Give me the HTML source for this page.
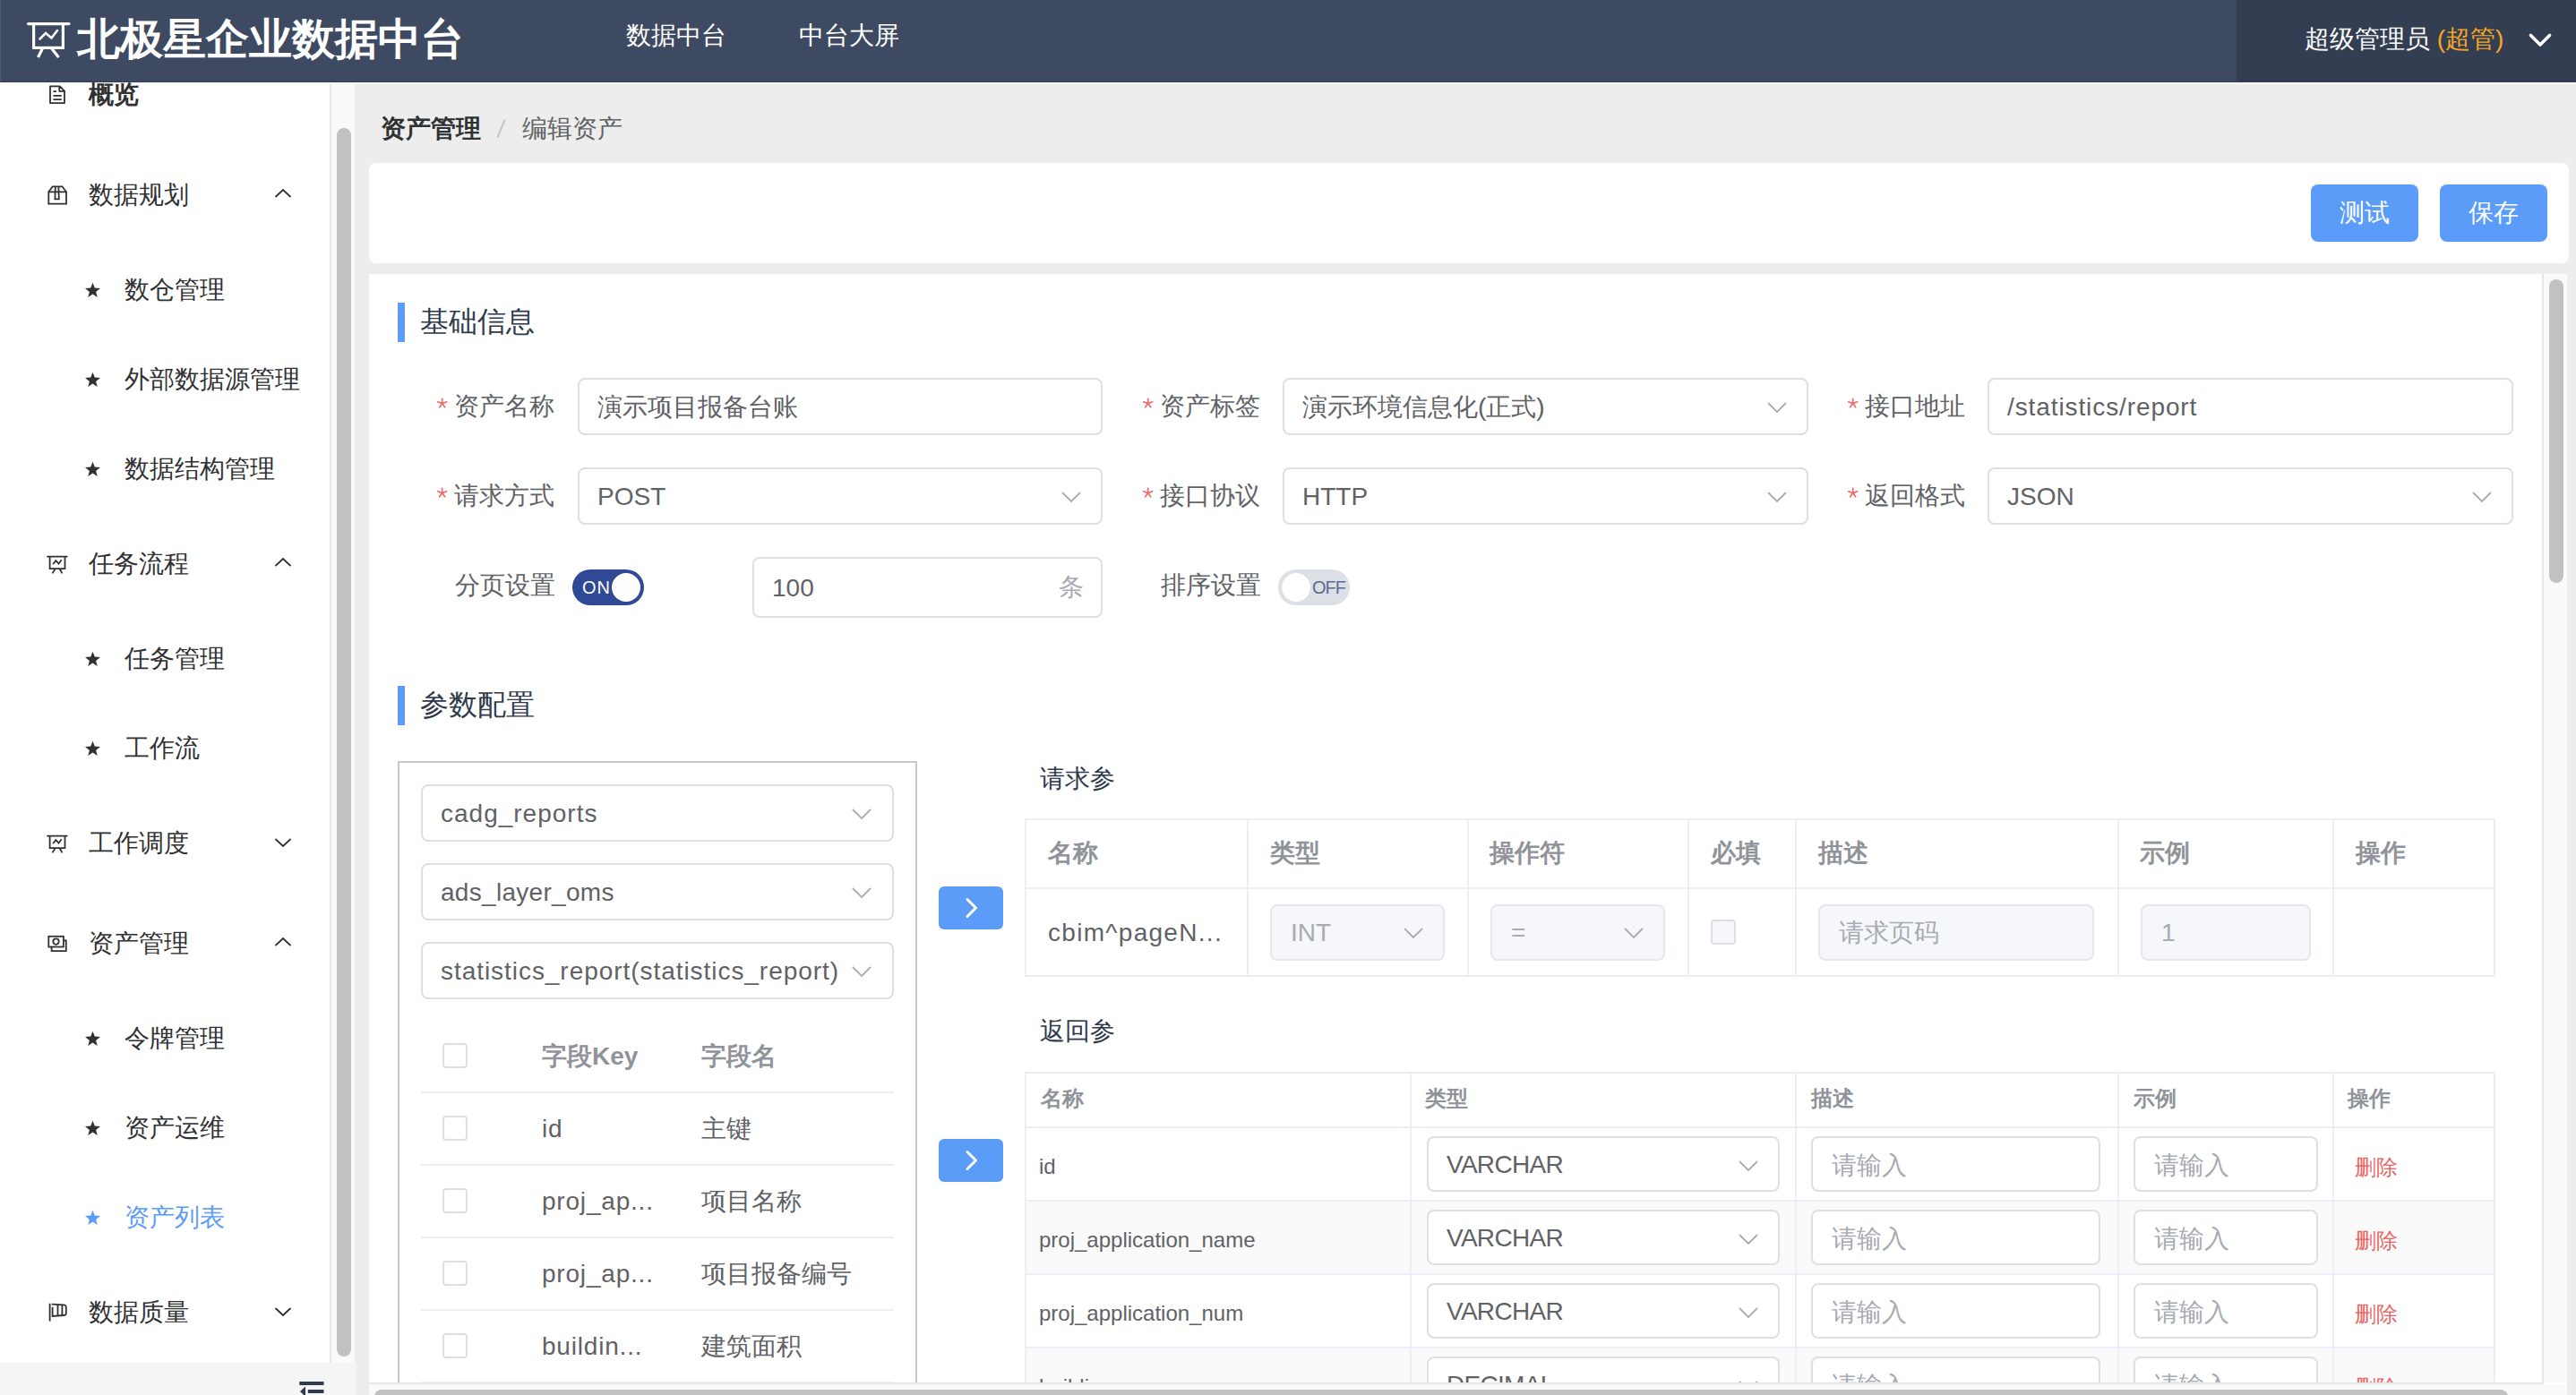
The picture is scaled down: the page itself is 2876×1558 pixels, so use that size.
<!DOCTYPE html>
<html><head><meta charset="utf-8">
<style>
*{box-sizing:border-box;margin:0;padding:0}
html,body{width:2876px;height:1558px;overflow:hidden}
body{position:relative;background:#ededed;font-family:"Liberation Sans",sans-serif;color:#303133}
.a{position:absolute}
.t{position:absolute;white-space:nowrap;line-height:40px}
/* header */
#hdr{left:0;top:0;width:2876px;height:92px;background:#3e4a62;border-bottom:1px solid #333e55}
#hdr2{left:2497px;top:0;width:379px;height:91px;background:#343e52}
#wl{left:0;top:92px;width:2876px;height:2px;background:linear-gradient(#fff 50%,#f4f4f4 50%)}
/* sidebar */
#side{left:0;top:94px;width:368px;height:1464px;background:#fff;overflow:hidden}
#sbord{left:368px;top:94px;width:2px;height:1428px;background:#e8e8e8}
#strack{left:370px;top:94px;width:26px;height:1428px;background:#fafafa}
#sthumb{left:376px;top:143px;width:16px;height:1372px;background:#c1c1c1;border-radius:8px}
#sbot{left:0;top:1522px;width:398px;height:36px;background:#f5f5f5}
.mi{font-size:28px;color:#303133}
.ic{position:absolute}
/* content */
.card{background:#fff}
.btn{position:absolute;background:#5a9cf8;border-radius:8px;color:#fff;font-size:28px;text-align:center;line-height:64px;height:64px;width:120px;top:206px}
.inp{position:absolute;border:2px solid #dcdfe6;border-radius:8px;background:#fff;height:64px}
.inp .v{position:absolute;left:20px;top:0;line-height:60px;font-size:28px;color:#606266;white-space:nowrap}
.chev{position:absolute;width:20px;height:12px}
.lbl{font-size:28px;color:#606266}
.req{font-size:28px;color:#f56c6c}
.sec{position:absolute;width:8px;height:44px;background:#5a9cf8}
.sect{font-size:32px;color:#2f3a4c}
</style></head><body>
<!-- HEADER -->
<div id="hdr" class="a"></div>
<div id="hdr2" class="a"></div>
<div class="a" style="left:0;top:0;width:1px;height:91px;background:#525d73"></div>
<div id="wl" class="a"></div>
<svg class="a" style="left:0;top:0" width="100" height="92" viewBox="0 0 100 92">
 <g fill="none" stroke="#fff" stroke-width="3.2" stroke-linecap="butt">
  <line x1="31.5" y1="26.6" x2="77" y2="26.6" stroke-linecap="round"/>
  <polyline points="37.6,27 37.6,53.3 70.4,53.3 70.4,27"/>
  <line x1="47.5" y1="54" x2="42.5" y2="64"/>
  <line x1="57.5" y1="54" x2="65.5" y2="64"/>
  <polyline points="44.5,43.5 51,37 57.5,42.5 64,34" stroke-width="2.6" stroke-linecap="round"/>
 </g>
</svg>
<div class="t" style="left:86px;top:14px;font-size:48px;font-weight:bold;color:#fff;line-height:60px">北极星企业数据中台</div>
<div class="t" style="left:699px;top:20px;font-size:28px;color:#fff">数据中台</div>
<div class="t" style="left:892px;top:20px;font-size:28px;color:#fff">中台大屏</div>
<div class="t" style="left:2573px;top:24px;font-size:28px;color:#fff">超级管理员 <span style="color:#f5a623">(超管)</span></div>
<svg class="a" style="left:2820px;top:34px" width="32" height="22" viewBox="0 0 32 22">
 <polyline points="5.5,5.5 16,16 26.5,5.5" fill="none" stroke="#fff" stroke-width="3.6" stroke-linecap="round" stroke-linejoin="round"/>
</svg>

<!-- SIDEBAR -->
<div id="side" class="a"></div>
<div class="t mi" style="left:99px;top:86px;font-weight:bold;">概览</div>
<svg class="a" style="left:50px;top:90px" width="30" height="30" viewBox="50 90 30 30"><path d="M56,96.3 H66.8 L72,101.6 V115.1 H56 Z M66.3,96.3 V101.9 H72" fill="none" stroke="#303133" stroke-width="1.8" stroke-linejoin="round"/><path d="M59.4,102.1 H63 M59.4,106.9 H68.7 M59.4,111.2 H68.7" fill="none" stroke="#303133" stroke-width="1.8"/></svg>
<div class="t mi" style="left:99px;top:198px;">数据规划</div>
<svg class="a" style="left:50px;top:200px" width="30" height="32" viewBox="50 200 30 32"><path d="M54.3,214.3 H74 V227.6 H54.3 Z" fill="none" stroke="#303133" stroke-width="1.8"/><path d="M54.3,214.3 L58.8,208.3 H69.4 L74,214.3" fill="none" stroke="#303133" stroke-width="1.8"/><path d="M61.8,208.3 L61.4,222.4 H65.8 L65.4,208.3" fill="none" stroke="#303133" stroke-width="1.8"/></svg>
<svg class="a" style="left:300px;top:202px" width="32" height="30" viewBox="300 202 32 30"><polyline points="307.5,220 316,212 324.5,220" fill="none" stroke="#303133" stroke-width="1.8"/></svg>
<div class="t mi" style="left:139px;top:304px;color:#303133">数仓管理</div>
<svg class="a" style="left:90px;top:308px" width="28" height="30" viewBox="90 308 28 30"><polygon points="103.50,315.80 105.75,321.60 111.96,321.95 107.14,325.88 108.73,331.90 103.50,328.53 98.27,331.90 99.86,325.88 95.04,321.95 101.25,321.60" fill="#303133"/></svg>
<div class="t mi" style="left:139px;top:404px;color:#303133">外部数据源管理</div>
<svg class="a" style="left:90px;top:408px" width="28" height="30" viewBox="90 408 28 30"><polygon points="103.50,415.80 105.75,421.60 111.96,421.95 107.14,425.88 108.73,431.90 103.50,428.53 98.27,431.90 99.86,425.88 95.04,421.95 101.25,421.60" fill="#303133"/></svg>
<div class="t mi" style="left:139px;top:504px;color:#303133">数据结构管理</div>
<svg class="a" style="left:90px;top:508px" width="28" height="30" viewBox="90 508 28 30"><polygon points="103.50,515.80 105.75,521.60 111.96,521.95 107.14,525.88 108.73,531.90 103.50,528.53 98.27,531.90 99.86,525.88 95.04,521.95 101.25,521.60" fill="#303133"/></svg>
<div class="t mi" style="left:99px;top:610px;">任务流程</div>
<svg class="a" style="left:50px;top:615px" width="30" height="30" viewBox="50 615 30 30"><path d="M53,621.6 H74.8" fill="none" stroke="#303133" stroke-width="1.8" stroke-linecap="round"/><path d="M55.6,621.6 V635.2 H72.5 V621.6" fill="none" stroke="#303133" stroke-width="1.8"/><path d="M61.5,635.5 L58.5,640.4 M66.8,635.5 L69.4,640.4" fill="none" stroke="#303133" stroke-width="1.8"/><path d="M59.2,630.2 L62.3,626.2 L65.5,629.5 L68.7,625.2" fill="none" stroke="#303133" stroke-width="1.8"/></svg>
<svg class="a" style="left:300px;top:614px" width="32" height="30" viewBox="300 614 32 30"><polyline points="307.5,632 316,624 324.5,632" fill="none" stroke="#303133" stroke-width="1.8"/></svg>
<div class="t mi" style="left:139px;top:716px;color:#303133">任务管理</div>
<svg class="a" style="left:90px;top:720px" width="28" height="30" viewBox="90 720 28 30"><polygon points="103.50,727.80 105.75,733.60 111.96,733.95 107.14,737.88 108.73,743.90 103.50,740.53 98.27,743.90 99.86,737.88 95.04,733.95 101.25,733.60" fill="#303133"/></svg>
<div class="t mi" style="left:139px;top:816px;color:#303133">工作流</div>
<svg class="a" style="left:90px;top:820px" width="28" height="30" viewBox="90 820 28 30"><polygon points="103.50,827.80 105.75,833.60 111.96,833.95 107.14,837.88 108.73,843.90 103.50,840.53 98.27,843.90 99.86,837.88 95.04,833.95 101.25,833.60" fill="#303133"/></svg>
<div class="t mi" style="left:99px;top:922px;">工作调度</div>
<svg class="a" style="left:50px;top:927px" width="30" height="30" viewBox="50 615 30 30"><path d="M53,621.6 H74.8" fill="none" stroke="#303133" stroke-width="1.8" stroke-linecap="round"/><path d="M55.6,621.6 V635.2 H72.5 V621.6" fill="none" stroke="#303133" stroke-width="1.8"/><path d="M61.5,635.5 L58.5,640.4 M66.8,635.5 L69.4,640.4" fill="none" stroke="#303133" stroke-width="1.8"/><path d="M59.2,630.2 L62.3,626.2 L65.5,629.5 L68.7,625.2" fill="none" stroke="#303133" stroke-width="1.8"/></svg>
<svg class="a" style="left:300px;top:926px" width="32" height="30" viewBox="300 926 32 30"><polyline points="307.5,937 316,945 324.5,937" fill="none" stroke="#303133" stroke-width="1.8"/></svg>
<div class="t mi" style="left:99px;top:1034px;">资产管理</div>
<svg class="a" style="left:50px;top:1040px" width="30" height="26" viewBox="50 1040 30 26"><rect x="54.3" y="1045.8" width="16.6" height="11.7" fill="none" stroke="#303133" stroke-width="1.8"/><path d="M70.9,1050.4 H73.8 V1062.2 H57.6 V1057.5" fill="none" stroke="#303133" stroke-width="1.8"/><circle cx="62.5" cy="1051.6" r="3.2" fill="none" stroke="#303133" stroke-width="1.8"/></svg>
<svg class="a" style="left:300px;top:1038px" width="32" height="30" viewBox="300 1038 32 30"><polyline points="307.5,1056 316,1048 324.5,1056" fill="none" stroke="#303133" stroke-width="1.8"/></svg>
<div class="t mi" style="left:139px;top:1140px;color:#303133">令牌管理</div>
<svg class="a" style="left:90px;top:1144px" width="28" height="30" viewBox="90 1144 28 30"><polygon points="103.50,1151.80 105.75,1157.60 111.96,1157.95 107.14,1161.88 108.73,1167.90 103.50,1164.53 98.27,1167.90 99.86,1161.88 95.04,1157.95 101.25,1157.60" fill="#303133"/></svg>
<div class="t mi" style="left:139px;top:1240px;color:#303133">资产运维</div>
<svg class="a" style="left:90px;top:1244px" width="28" height="30" viewBox="90 1244 28 30"><polygon points="103.50,1251.80 105.75,1257.60 111.96,1257.95 107.14,1261.88 108.73,1267.90 103.50,1264.53 98.27,1267.90 99.86,1261.88 95.04,1257.95 101.25,1257.60" fill="#303133"/></svg>
<div class="t mi" style="left:139px;top:1340px;color:#5b9cf7">资产列表</div>
<svg class="a" style="left:90px;top:1344px" width="28" height="30" viewBox="90 1344 28 30"><polygon points="103.50,1351.80 105.75,1357.60 111.96,1357.95 107.14,1361.88 108.73,1367.90 103.50,1364.53 98.27,1367.90 99.86,1361.88 95.04,1357.95 101.25,1357.60" fill="#5b9cf7"/></svg>
<div class="t mi" style="left:99px;top:1446px;">数据质量</div>
<svg class="a" style="left:50px;top:1450px" width="30" height="30" viewBox="50 1450 30 30"><path d="M55.6,1455.8 V1475.6" fill="none" stroke="#303133" stroke-width="1.8"/><path d="M58.6,1457.6 V1456.6 L71.5,1457.4 Q73.8,1457.7 73.8,1460.2 V1466.8 Q73.8,1468.8 71.5,1469 L58.6,1470 V1459.8" fill="none" stroke="#303133" stroke-width="1.8"/><path d="M64.5,1457 V1469.4 M69.4,1457.2 V1469.1" fill="none" stroke="#303133" stroke-width="1.8"/></svg>
<svg class="a" style="left:300px;top:1450px" width="32" height="30" viewBox="300 1450 32 30"><polyline points="307.5,1461 316,1469 324.5,1461" fill="none" stroke="#303133" stroke-width="1.8"/></svg>
<div id="sbord" class="a"></div>
<div id="strack" class="a"></div>
<div id="sthumb" class="a"></div>
<div id="sbot" class="a"></div>
<svg class="a" style="left:330px;top:1538px" width="40" height="20" viewBox="330 1538 40 20"><rect x="334.3" y="1543" width="27.2" height="4" fill="#2d3a4f"/><rect x="343.8" y="1552" width="17.7" height="4" fill="#2d3a4f"/><polygon points="341,1548.5 341,1560 335,1554" fill="#2d3a4f"/></svg>


<!-- BREADCRUMB -->
<div class="t" style="left:425px;top:124px;font-size:28px;font-weight:bold;color:#303133">资产管理</div>
<svg class="a" style="left:548px;top:128px" width="22" height="32" viewBox="548 128 22 32"><line x1="555.3" y1="153.6" x2="563.9" y2="133.4" stroke="#c0c4cc" stroke-width="2"/></svg>
<div class="t" style="left:583px;top:124px;font-size:28px;color:#606266">编辑资产</div>

<!-- TOP CARD -->
<div class="a card" style="left:412px;top:182px;width:2456px;height:112px;border-radius:8px"></div>
<div class="btn" style="left:2580px">测试</div>
<div class="btn" style="left:2724px">保存</div>

<!-- MAIN CARD -->
<div class="a card" style="left:412px;top:306px;width:2454px;height:1252px"></div>
<div class="a" style="left:412px;top:306px;width:2426px;height:1238px;overflow:hidden">
<div class="a" style="left:-412px;top:-306px;width:2876px;height:1558px">
<div class="a" style="left:444px;top:338px;width:8px;height:44px;background:#5a9cf8"></div>
<div class="t" style="left:469px;top:339px;font-size:32px;color:#2f3a4c;">基础信息</div>
<svg class="a" style="left:484px;top:439px" width="20" height="20" viewBox="484 439 20 20"><g stroke="#ec6b6b" stroke-width="1.7" stroke-linecap="round"><line x1="493.7" y1="450.6" x2="493.7" y2="445.4"/><line x1="493.7" y1="450.6" x2="498.7" y2="448.8"/><line x1="493.7" y1="450.6" x2="488.7" y2="448.8"/><line x1="493.7" y1="450.6" x2="496.7" y2="454.8"/><line x1="493.7" y1="450.6" x2="490.7" y2="454.8"/></g></svg>
<div class="t" style="left:507px;top:434px;font-size:28px;color:#606266;">资产名称</div>
<div class="a" style="left:645px;top:422px;width:586px;height:64px;border:2px solid #dcdfe6;background:#fff;border-radius:8px"></div>
<div class="t" style="left:667px;top:435px;font-size:28px;color:#606266;">演示项目报备台账</div>
<svg class="a" style="left:1272px;top:439px" width="20" height="20" viewBox="1272 439 20 20"><g stroke="#ec6b6b" stroke-width="1.7" stroke-linecap="round"><line x1="1281.7" y1="450.6" x2="1281.7" y2="445.4"/><line x1="1281.7" y1="450.6" x2="1286.7" y2="448.8"/><line x1="1281.7" y1="450.6" x2="1276.7" y2="448.8"/><line x1="1281.7" y1="450.6" x2="1284.7" y2="454.8"/><line x1="1281.7" y1="450.6" x2="1278.7" y2="454.8"/></g></svg>
<div class="t" style="left:1295px;top:434px;font-size:28px;color:#606266;">资产标签</div>
<div class="a" style="left:1432px;top:422px;width:587px;height:64px;border:2px solid #dcdfe6;background:#fff;border-radius:8px"></div>
<div class="t" style="left:1454px;top:435px;font-size:28px;color:#606266;">演示环境信息化(正式)</div>
<svg class="a" style="left:1972px;top:446.7px" width="24" height="16.0" viewBox="1972 446.7 24 16.0"><polyline points="1974,449.7 1984.0,459.7 1994,449.7" fill="none" stroke="#a8abb2" stroke-width="1.8"/></svg>
<svg class="a" style="left:2059px;top:439px" width="20" height="20" viewBox="2059 439 20 20"><g stroke="#ec6b6b" stroke-width="1.7" stroke-linecap="round"><line x1="2068.7" y1="450.6" x2="2068.7" y2="445.4"/><line x1="2068.7" y1="450.6" x2="2073.7" y2="448.8"/><line x1="2068.7" y1="450.6" x2="2063.7" y2="448.8"/><line x1="2068.7" y1="450.6" x2="2071.7" y2="454.8"/><line x1="2068.7" y1="450.6" x2="2065.7" y2="454.8"/></g></svg>
<div class="t" style="left:2082px;top:434px;font-size:28px;color:#606266;">接口地址</div>
<div class="a" style="left:2219px;top:422px;width:587px;height:64px;border:2px solid #dcdfe6;background:#fff;border-radius:8px"></div>
<div class="t" style="left:2241px;top:435px;font-size:28px;color:#606266;letter-spacing:0.9px;">/statistics/report</div>
<svg class="a" style="left:484px;top:539px" width="20" height="20" viewBox="484 539 20 20"><g stroke="#ec6b6b" stroke-width="1.7" stroke-linecap="round"><line x1="493.7" y1="550.6" x2="493.7" y2="545.4"/><line x1="493.7" y1="550.6" x2="498.7" y2="548.8"/><line x1="493.7" y1="550.6" x2="488.7" y2="548.8"/><line x1="493.7" y1="550.6" x2="496.7" y2="554.8"/><line x1="493.7" y1="550.6" x2="490.7" y2="554.8"/></g></svg>
<div class="t" style="left:507px;top:534px;font-size:28px;color:#606266;">请求方式</div>
<div class="a" style="left:645px;top:522px;width:586px;height:64px;border:2px solid #dcdfe6;background:#fff;border-radius:8px"></div>
<div class="t" style="left:667px;top:535px;font-size:28px;color:#606266;">POST</div>
<svg class="a" style="left:1184px;top:546.7px" width="24" height="16.0" viewBox="1184 546.7 24 16.0"><polyline points="1186,549.7 1196.0,559.7 1206,549.7" fill="none" stroke="#a8abb2" stroke-width="1.8"/></svg>
<svg class="a" style="left:1272px;top:539px" width="20" height="20" viewBox="1272 539 20 20"><g stroke="#ec6b6b" stroke-width="1.7" stroke-linecap="round"><line x1="1281.7" y1="550.6" x2="1281.7" y2="545.4"/><line x1="1281.7" y1="550.6" x2="1286.7" y2="548.8"/><line x1="1281.7" y1="550.6" x2="1276.7" y2="548.8"/><line x1="1281.7" y1="550.6" x2="1284.7" y2="554.8"/><line x1="1281.7" y1="550.6" x2="1278.7" y2="554.8"/></g></svg>
<div class="t" style="left:1295px;top:534px;font-size:28px;color:#606266;">接口协议</div>
<div class="a" style="left:1432px;top:522px;width:587px;height:64px;border:2px solid #dcdfe6;background:#fff;border-radius:8px"></div>
<div class="t" style="left:1454px;top:535px;font-size:28px;color:#606266;">HTTP</div>
<svg class="a" style="left:1972px;top:546.7px" width="24" height="16.0" viewBox="1972 546.7 24 16.0"><polyline points="1974,549.7 1984.0,559.7 1994,549.7" fill="none" stroke="#a8abb2" stroke-width="1.8"/></svg>
<svg class="a" style="left:2059px;top:539px" width="20" height="20" viewBox="2059 539 20 20"><g stroke="#ec6b6b" stroke-width="1.7" stroke-linecap="round"><line x1="2068.7" y1="550.6" x2="2068.7" y2="545.4"/><line x1="2068.7" y1="550.6" x2="2073.7" y2="548.8"/><line x1="2068.7" y1="550.6" x2="2063.7" y2="548.8"/><line x1="2068.7" y1="550.6" x2="2071.7" y2="554.8"/><line x1="2068.7" y1="550.6" x2="2065.7" y2="554.8"/></g></svg>
<div class="t" style="left:2082px;top:534px;font-size:28px;color:#606266;">返回格式</div>
<div class="a" style="left:2219px;top:522px;width:587px;height:64px;border:2px solid #dcdfe6;background:#fff;border-radius:8px"></div>
<div class="t" style="left:2241px;top:535px;font-size:28px;color:#606266;">JSON</div>
<svg class="a" style="left:2759px;top:546.7px" width="24" height="16.0" viewBox="2759 546.7 24 16.0"><polyline points="2761,549.7 2771.0,559.7 2781,549.7" fill="none" stroke="#a8abb2" stroke-width="1.8"/></svg>
<div class="t" style="left:508px;top:634px;font-size:28px;color:#606266;">分页设置</div>
<div class="a" style="left:639px;top:636px;width:80px;height:40px;border-radius:20px;background:#2f4994"></div>
<div class="a" style="left:683px;top:640px;width:32px;height:32px;border-radius:16px;background:#fff"></div>
<div class="t" style="left:650px;top:636px;font-size:20px;line-height:40px;color:#fff;letter-spacing:1px">ON</div>
<div class="a" style="left:840px;top:622px;width:391px;height:68px;border:2px solid #dcdfe6;background:#fff;border-radius:8px"></div>
<div class="t" style="left:862px;top:637px;font-size:28px;color:#606266;">100</div>
<div class="t" style="left:1182px;top:636px;font-size:28px;color:#a8abb2;">条</div>
<div class="t" style="left:1296px;top:634px;font-size:28px;color:#606266;">排序设置</div>
<div class="a" style="left:1427px;top:636px;width:80px;height:40px;border-radius:20px;background:#dcdfe6"></div>
<div class="a" style="left:1431px;top:640px;width:32px;height:32px;border-radius:16px;background:#fff"></div>
<div class="t" style="left:1465px;top:636px;font-size:20px;line-height:40px;color:#5b6a8f;letter-spacing:-1px">OFF</div>
<div class="a" style="left:444px;top:766px;width:8px;height:44px;background:#5a9cf8"></div>
<div class="t" style="left:469px;top:767px;font-size:32px;color:#2f3a4c;">参数配置</div>
<div class="a" style="left:444px;top:850px;width:580px;height:760px;border:2px solid #c8c8c8"></div>
<div class="a" style="left:470px;top:876px;width:528px;height:64px;border:2px solid #dcdfe6;background:#fff;border-radius:8px"></div>
<div class="t" style="left:492px;top:889px;font-size:28px;color:#606266;letter-spacing:1px;">cadg_reports</div>
<svg class="a" style="left:950px;top:900.7px" width="24" height="16.0" viewBox="950 900.7 24 16.0"><polyline points="952,903.7 962.0,913.7 972,903.7" fill="none" stroke="#a8abb2" stroke-width="1.8"/></svg>
<div class="a" style="left:470px;top:964px;width:528px;height:64px;border:2px solid #dcdfe6;background:#fff;border-radius:8px"></div>
<div class="t" style="left:492px;top:977px;font-size:28px;color:#606266;letter-spacing:0.3px;">ads_layer_oms</div>
<svg class="a" style="left:950px;top:988.7px" width="24" height="16.0" viewBox="950 988.7 24 16.0"><polyline points="952,991.7 962.0,1001.7 972,991.7" fill="none" stroke="#a8abb2" stroke-width="1.8"/></svg>
<div class="a" style="left:470px;top:1052px;width:528px;height:64px;border:2px solid #dcdfe6;background:#fff;border-radius:8px"></div>
<div class="t" style="left:492px;top:1065px;font-size:28px;color:#606266;letter-spacing:0.95px;">statistics_report(statistics_report)</div>
<svg class="a" style="left:950px;top:1076.7px" width="24" height="16.0" viewBox="950 1076.7 24 16.0"><polyline points="952,1079.7 962.0,1089.7 972,1079.7" fill="none" stroke="#a8abb2" stroke-width="1.8"/></svg>
<div class="a" style="left:494px;top:1165px;width:28px;height:28px;border:2px solid #dcdfe6;border-radius:4px;background:#fff"></div>
<div class="t" style="left:605px;top:1160px;font-size:28px;color:#909399;font-weight:bold;">字段Key</div>
<div class="t" style="left:783px;top:1160px;font-size:28px;color:#909399;font-weight:bold;">字段名</div>
<div class="a" style="left:470px;top:1219px;width:528px;height:2px;background:#ebeef5"></div>
<div class="a" style="left:494px;top:1246px;width:28px;height:28px;border:2px solid #dcdfe6;border-radius:4px;background:#fff"></div>
<div class="t" style="left:605px;top:1241px;font-size:28px;color:#606266;letter-spacing:0.8px;">id</div>
<div class="t" style="left:783px;top:1241px;font-size:28px;color:#606266;">主键</div>
<div class="a" style="left:470px;top:1300px;width:528px;height:2px;background:#ebeef5"></div>
<div class="a" style="left:494px;top:1327px;width:28px;height:28px;border:2px solid #dcdfe6;border-radius:4px;background:#fff"></div>
<div class="t" style="left:605px;top:1322px;font-size:28px;color:#606266;letter-spacing:0.8px;">proj_ap...</div>
<div class="t" style="left:783px;top:1322px;font-size:28px;color:#606266;">项目名称</div>
<div class="a" style="left:470px;top:1381px;width:528px;height:2px;background:#ebeef5"></div>
<div class="a" style="left:494px;top:1408px;width:28px;height:28px;border:2px solid #dcdfe6;border-radius:4px;background:#fff"></div>
<div class="t" style="left:605px;top:1403px;font-size:28px;color:#606266;letter-spacing:0.8px;">proj_ap...</div>
<div class="t" style="left:783px;top:1403px;font-size:28px;color:#606266;">项目报备编号</div>
<div class="a" style="left:470px;top:1462px;width:528px;height:2px;background:#ebeef5"></div>
<div class="a" style="left:494px;top:1489px;width:28px;height:28px;border:2px solid #dcdfe6;border-radius:4px;background:#fff"></div>
<div class="t" style="left:605px;top:1484px;font-size:28px;color:#606266;letter-spacing:0.8px;">buildin...</div>
<div class="t" style="left:783px;top:1484px;font-size:28px;color:#606266;">建筑面积</div>
<div class="a" style="left:470px;top:1543px;width:528px;height:2px;background:#ebeef5"></div>
<div class="a" style="left:1048px;top:990px;width:72px;height:48px;border-radius:6px;background:#5a9cf8"></div>
<svg class="a" style="left:1070px;top:990px" width="30" height="48" viewBox="1070 990 30 48"><polyline points="1080,1004.5 1089.5,1014 1080,1023.5" fill="none" stroke="#fff" stroke-width="3" stroke-linecap="round" stroke-linejoin="round"/></svg>
<div class="a" style="left:1048px;top:1272px;width:72px;height:48px;border-radius:6px;background:#5a9cf8"></div>
<svg class="a" style="left:1070px;top:1272px" width="30" height="48" viewBox="1070 1272 30 48"><polyline points="1080,1286.5 1089.5,1296 1080,1305.5" fill="none" stroke="#fff" stroke-width="3" stroke-linecap="round" stroke-linejoin="round"/></svg>
<div class="t" style="left:1161px;top:850px;font-size:28px;color:#2f3a4c;">请求参</div>
<div class="a" style="left:1144px;top:914px;width:1642px;height:177px;border:2px solid #ebeef5;background:#fff"></div>
<div class="a" style="left:1144px;top:991px;width:1642px;height:2px;background:#ebeef5"></div>
<div class="a" style="left:1392px;top:914px;width:2px;height:177px;background:#ebeef5"></div>
<div class="a" style="left:1638px;top:914px;width:2px;height:177px;background:#ebeef5"></div>
<div class="a" style="left:1884px;top:914px;width:2px;height:177px;background:#ebeef5"></div>
<div class="a" style="left:2004px;top:914px;width:2px;height:177px;background:#ebeef5"></div>
<div class="a" style="left:2364px;top:914px;width:2px;height:177px;background:#ebeef5"></div>
<div class="a" style="left:2604px;top:914px;width:2px;height:177px;background:#ebeef5"></div>
<div class="t" style="left:1170px;top:933px;font-size:28px;color:#909399;font-weight:bold;">名称</div>
<div class="t" style="left:1418px;top:933px;font-size:28px;color:#909399;font-weight:bold;">类型</div>
<div class="t" style="left:1663px;top:933px;font-size:28px;color:#909399;font-weight:bold;">操作符</div>
<div class="t" style="left:1910px;top:933px;font-size:28px;color:#909399;font-weight:bold;">必填</div>
<div class="t" style="left:2030px;top:933px;font-size:28px;color:#909399;font-weight:bold;">描述</div>
<div class="t" style="left:2389px;top:933px;font-size:28px;color:#909399;font-weight:bold;">示例</div>
<div class="t" style="left:2630px;top:933px;font-size:28px;color:#909399;font-weight:bold;">操作</div>
<div class="t" style="left:1170px;top:1022px;font-size:28px;color:#606266;letter-spacing:1.3px;">cbim^pageN...</div>
<div class="a" style="left:1418px;top:1010px;width:195px;height:63px;border:2px solid #e4e7ed;background:#f5f7fa;border-radius:8px"></div>
<div class="t" style="left:1441px;top:1022px;font-size:28px;color:#a8abb2;">INT</div>
<svg class="a" style="left:1566px;top:1033.7px" width="24" height="16.0" viewBox="1566 1033.7 24 16.0"><polyline points="1568,1036.7 1578.0,1046.7 1588,1036.7" fill="none" stroke="#a8abb2" stroke-width="1.8"/></svg>
<div class="a" style="left:1664px;top:1010px;width:195px;height:63px;border:2px solid #e4e7ed;background:#f5f7fa;border-radius:8px"></div>
<div class="t" style="left:1687px;top:1022px;font-size:28px;color:#a8abb2;">=</div>
<svg class="a" style="left:1812px;top:1033.7px" width="24" height="16.0" viewBox="1812 1033.7 24 16.0"><polyline points="1814,1036.7 1824.0,1046.7 1834,1036.7" fill="none" stroke="#a8abb2" stroke-width="1.8"/></svg>
<div class="a" style="left:1910px;top:1027px;width:28px;height:28px;border:2px solid #dcdfe6;border-radius:4px;background:#f5f7fa"></div>
<div class="a" style="left:2030px;top:1010px;width:308px;height:63px;border:2px solid #e4e7ed;background:#f5f7fa;border-radius:8px"></div>
<div class="t" style="left:2053px;top:1022px;font-size:28px;color:#a8abb2;">请求页码</div>
<div class="a" style="left:2390px;top:1010px;width:190px;height:63px;border:2px solid #e4e7ed;background:#f5f7fa;border-radius:8px"></div>
<div class="t" style="left:2413px;top:1022px;font-size:28px;color:#a8abb2;">1</div>
<div class="t" style="left:1161px;top:1132px;font-size:28px;color:#2f3a4c;">返回参</div>
<div class="a" style="left:1144px;top:1197px;width:1642px;height:420px;border:2px solid #ebeef5;background:#fff"></div>
<div class="a" style="left:1144px;top:1258px;width:1642px;height:2px;background:#ebeef5"></div>
<div class="t" style="left:1160px;top:1283px;font-size:24px;color:#606266;">id</div>
<div class="a" style="left:1593px;top:1269px;width:394px;height:62px;border:2px solid #dcdfe6;background:#fff;border-radius:8px"></div>
<div class="t" style="left:1615px;top:1281px;font-size:28px;color:#606266;letter-spacing:-0.7px;">VARCHAR</div>
<svg class="a" style="left:1940px;top:1293.7px" width="24" height="16.0" viewBox="1940 1293.7 24 16.0"><polyline points="1942,1296.7 1952.0,1306.7 1962,1296.7" fill="none" stroke="#a8abb2" stroke-width="1.8"/></svg>
<div class="a" style="left:2022px;top:1269px;width:323px;height:62px;border:2px solid #dcdfe6;background:#fff;border-radius:8px"></div>
<div class="t" style="left:2045px;top:1282px;font-size:28px;color:#a8abb2;">请输入</div>
<div class="a" style="left:2382px;top:1269px;width:206px;height:62px;border:2px solid #dcdfe6;background:#fff;border-radius:8px"></div>
<div class="t" style="left:2405px;top:1282px;font-size:28px;color:#a8abb2;">请输入</div>
<div class="t" style="left:2629px;top:1284px;font-size:24px;color:#ea6462;">删除</div>
<div class="a" style="left:1146px;top:1340px;width:1638px;height:82px;background:#fafafa"></div>
<div class="a" style="left:1144px;top:1340px;width:1642px;height:2px;background:#ebeef5"></div>
<div class="t" style="left:1160px;top:1365px;font-size:24px;color:#606266;">proj_application_name</div>
<div class="a" style="left:1593px;top:1351px;width:394px;height:62px;border:2px solid #dcdfe6;background:#fff;border-radius:8px"></div>
<div class="t" style="left:1615px;top:1363px;font-size:28px;color:#606266;letter-spacing:-0.7px;">VARCHAR</div>
<svg class="a" style="left:1940px;top:1375.7px" width="24" height="16.0" viewBox="1940 1375.7 24 16.0"><polyline points="1942,1378.7 1952.0,1388.7 1962,1378.7" fill="none" stroke="#a8abb2" stroke-width="1.8"/></svg>
<div class="a" style="left:2022px;top:1351px;width:323px;height:62px;border:2px solid #dcdfe6;background:#fff;border-radius:8px"></div>
<div class="t" style="left:2045px;top:1364px;font-size:28px;color:#a8abb2;">请输入</div>
<div class="a" style="left:2382px;top:1351px;width:206px;height:62px;border:2px solid #dcdfe6;background:#fff;border-radius:8px"></div>
<div class="t" style="left:2405px;top:1364px;font-size:28px;color:#a8abb2;">请输入</div>
<div class="t" style="left:2629px;top:1366px;font-size:24px;color:#ea6462;">删除</div>
<div class="a" style="left:1144px;top:1422px;width:1642px;height:2px;background:#ebeef5"></div>
<div class="t" style="left:1160px;top:1447px;font-size:24px;color:#606266;">proj_application_num</div>
<div class="a" style="left:1593px;top:1433px;width:394px;height:62px;border:2px solid #dcdfe6;background:#fff;border-radius:8px"></div>
<div class="t" style="left:1615px;top:1445px;font-size:28px;color:#606266;letter-spacing:-0.7px;">VARCHAR</div>
<svg class="a" style="left:1940px;top:1457.7px" width="24" height="16.0" viewBox="1940 1457.7 24 16.0"><polyline points="1942,1460.7 1952.0,1470.7 1962,1460.7" fill="none" stroke="#a8abb2" stroke-width="1.8"/></svg>
<div class="a" style="left:2022px;top:1433px;width:323px;height:62px;border:2px solid #dcdfe6;background:#fff;border-radius:8px"></div>
<div class="t" style="left:2045px;top:1446px;font-size:28px;color:#a8abb2;">请输入</div>
<div class="a" style="left:2382px;top:1433px;width:206px;height:62px;border:2px solid #dcdfe6;background:#fff;border-radius:8px"></div>
<div class="t" style="left:2405px;top:1446px;font-size:28px;color:#a8abb2;">请输入</div>
<div class="t" style="left:2629px;top:1448px;font-size:24px;color:#ea6462;">删除</div>
<div class="a" style="left:1146px;top:1504px;width:1638px;height:82px;background:#fafafa"></div>
<div class="a" style="left:1144px;top:1504px;width:1642px;height:2px;background:#ebeef5"></div>
<div class="t" style="left:1160px;top:1529px;font-size:24px;color:#606266;">building_area</div>
<div class="a" style="left:1593px;top:1515px;width:394px;height:62px;border:2px solid #dcdfe6;background:#fff;border-radius:8px"></div>
<div class="t" style="left:1615px;top:1527px;font-size:28px;color:#606266;letter-spacing:-0.7px;">DECIMAL</div>
<svg class="a" style="left:1940px;top:1539.7px" width="24" height="16.0" viewBox="1940 1539.7 24 16.0"><polyline points="1942,1542.7 1952.0,1552.7 1962,1542.7" fill="none" stroke="#a8abb2" stroke-width="1.8"/></svg>
<div class="a" style="left:2022px;top:1515px;width:323px;height:62px;border:2px solid #dcdfe6;background:#fff;border-radius:8px"></div>
<div class="t" style="left:2045px;top:1528px;font-size:28px;color:#a8abb2;">请输入</div>
<div class="a" style="left:2382px;top:1515px;width:206px;height:62px;border:2px solid #dcdfe6;background:#fff;border-radius:8px"></div>
<div class="t" style="left:2405px;top:1528px;font-size:28px;color:#a8abb2;">请输入</div>
<div class="t" style="left:2629px;top:1530px;font-size:24px;color:#ea6462;">删除</div>
<div class="a" style="left:1574px;top:1197px;width:2px;height:403px;background:#ebeef5"></div>
<div class="a" style="left:2004px;top:1197px;width:2px;height:403px;background:#ebeef5"></div>
<div class="a" style="left:2364px;top:1197px;width:2px;height:403px;background:#ebeef5"></div>
<div class="a" style="left:2604px;top:1197px;width:2px;height:403px;background:#ebeef5"></div>
<div class="t" style="left:1162px;top:1207px;font-size:24px;color:#909399;font-weight:bold;">名称</div>
<div class="t" style="left:1591px;top:1207px;font-size:24px;color:#909399;font-weight:bold;">类型</div>
<div class="t" style="left:2022px;top:1207px;font-size:24px;color:#909399;font-weight:bold;">描述</div>
<div class="t" style="left:2382px;top:1207px;font-size:24px;color:#909399;font-weight:bold;">示例</div>
<div class="t" style="left:2621px;top:1207px;font-size:24px;color:#909399;font-weight:bold;">操作</div>
</div></div>
<!-- card scrollbars -->
<div class="a" style="left:2838px;top:306px;width:2px;height:1238px;background:#e8e8e8"></div>
<div class="a" style="left:2840px;top:306px;width:26px;height:1238px;background:#fafafa"></div>
<div class="a" style="left:2846px;top:312px;width:16px;height:339px;border-radius:8px;background:#c1c1c1"></div>
<div class="a" style="left:412px;top:1544px;width:2428px;height:2px;background:#e8e8e8"></div>
<div class="a" style="left:412px;top:1546px;width:2454px;height:12px;background:#fafafa"></div>
<div class="a" style="left:418px;top:1552px;width:2382px;height:16px;border-radius:8px;background:#c1c1c1"></div>
</body></html>
